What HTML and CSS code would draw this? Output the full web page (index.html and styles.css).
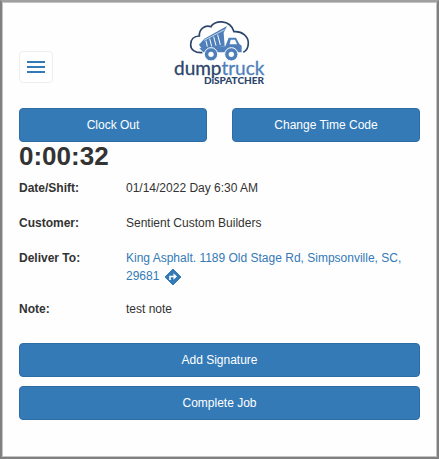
FILE: index.html
```html
<!DOCTYPE html>
<html lang="en">
<head>
<meta charset="UTF-8">
<meta name="viewport" content="width=device-width, initial-scale=1.0">
<title>Dump Truck Dispatcher</title>
<link rel="stylesheet" href="styles.css">
</head>
<body>
<div class="page">
  <header class="header">
    <button type="button" class="menuBtn" aria-label="Menu">
      <span class="bar"></span>
      <span class="bar"></span>
      <span class="bar"></span>
    </button>
    <svg class="logo" viewBox="0 0 96 70" role="img" aria-label="dumptruck Dispatcher">
      <g transform="translate(-12 -6) scale(.3333)">
        <!-- cloud -->
        <path d="M127 122C104 123 92 113 92 98C92 82 102 72 118 72C117 52 133 38 153 44C161 25 210 20 222 59C247 57 265 73 265 93C265 106 260 116 250 121" fill="none" stroke="#2c456b" stroke-width="5"/>
        <!-- tipped bed -->
        <path d="M117 98L133 80L201 42L191 62L194 103L126 111Z" fill="#4f7fba"/>
        <path d="M138 86L142 104M149 80L155 103M161 74L168 101M173 68L181 99" stroke="#fff" stroke-width="3"/>
        <path d="M132 85L194 53" stroke="#fff" stroke-width="2"/>
        <!-- cab and chassis -->
        <path d="M118 109L196 103L206 77H228L238 96L245 101V121H130Z" fill="#4f7fba"/>
        <path d="M212 83H225L231 97H209Z" fill="#fff"/>
        <circle cx="153" cy="127" r="20" fill="#4f7fba" stroke="#fff" stroke-width="3"/>
        <circle cx="153" cy="127" r="8" fill="#fff"/>
        <circle cx="214" cy="127" r="20" fill="#4f7fba" stroke="#fff" stroke-width="3"/>
        <circle cx="214" cy="127" r="8" fill="#fff"/>
      </g>
      <text x="2" y="57" class="logoName">dump<tspan class="logoLight">truck</tspan></text>
      <text x="92" y="66" class="logoSub">DiSPATCHER</text>
    </svg>
  </header>
  <main>
    <div class="clockRow">
      <button type="button" class="btn">Clock Out</button>
      <button type="button" class="btn">Change Time Code</button>
    </div>
    <div class="timer">0:00:32</div>
    <dl class="details">
      <dt>Date/Shift:</dt>
      <dd>01/14/2022 Day 6:30 AM</dd>
      <dt>Customer:</dt>
      <dd>Sentient Custom Builders</dd>
      <dt>Deliver To:</dt>
      <dd>
        <a href="#directions">King Asphalt. 1189 Old Stage Rd, Simpsonville, SC, 29681
          <svg class="directions" viewBox="0 0 18 18" aria-hidden="true">
            <path d="M9 1L17 9L9 17L1 9Z" fill="#337ab7" stroke="#337ab7" stroke-width="1" stroke-linejoin="round"/>
            <path d="M6 12V8.500H10" fill="none" stroke="#fff" stroke-width="1.600"/>
            <path d="M9.500 5.200L13 8.500L9.500 11.800Z" fill="#fff"/>
          </svg>
        </a>
      </dd>
      <dt>Note:</dt>
      <dd>test note</dd>
    </dl>
    <div class="actions">
      <button type="button" class="btn">Add Signature</button>
      <button type="button" class="btn">Complete Job</button>
    </div>
  </main>
</div>
</body>
</html>
```

FILE: styles.css
```css
* { box-sizing:border-box; }
body { margin:0; font-family:"Liberation Sans",Arial,sans-serif; font-size:12px; line-height:18px; color:#333; background:#fefefe; }
.page { min-height:100vh; padding:16px 17px 32px; border:2px solid #808080; border-top-color:#a0a0a0; box-shadow:inset 0 0 0 1px #c4c4c4; }
.header { display:grid; grid-template-columns:1fr auto 1fr; align-items:end; height:90px; padding-bottom:20px; }
.menuBtn { display:flex; flex-direction:column; justify-content:center; align-items:center; gap:3px; width:34px; height:32px; margin-bottom:5px; padding:0; background:#fff; border:1px solid #eee; border-radius:4px; cursor:pointer; }
.bar { width:18px; height:2px; background:#337ab7; }
.logo { display:block; width:96px; height:70px; }
.logoName { font-family:Lato,sans-serif; font-size:19px; fill:#2c456b; stroke:#2c456b; stroke-width:.3; }
.logoLight { fill:#4f7fba; stroke:#4f7fba; }
.logoSub { font-family:Lato,sans-serif; font-size:10px; font-weight:900; fill:#2c456b; text-anchor:end; }
.clockRow { display:grid; grid-template-columns:1fr 1fr; gap:25px; }
.btn { height:34px; padding:0 12px; font-family:inherit; font-size:12px; color:#fff; background:#337ab7; border:1px solid #2e6da4; border-radius:4px; cursor:pointer; }
.timer { font-size:26px; font-weight:bold; line-height:28px; }
.details { display:grid; grid-template-columns:93px 1fr; gap:14px; margin:9px 0 22px; }
.details dt, .details dd { min-height:21px; margin:0; }
.details dt { font-weight:bold; }
.details a { color:#337ab7; text-decoration:none; }
.directions { width:18px; height:18px; margin-left:1px; vertical-align:middle; }
.actions { display:grid; gap:9px; }
```
